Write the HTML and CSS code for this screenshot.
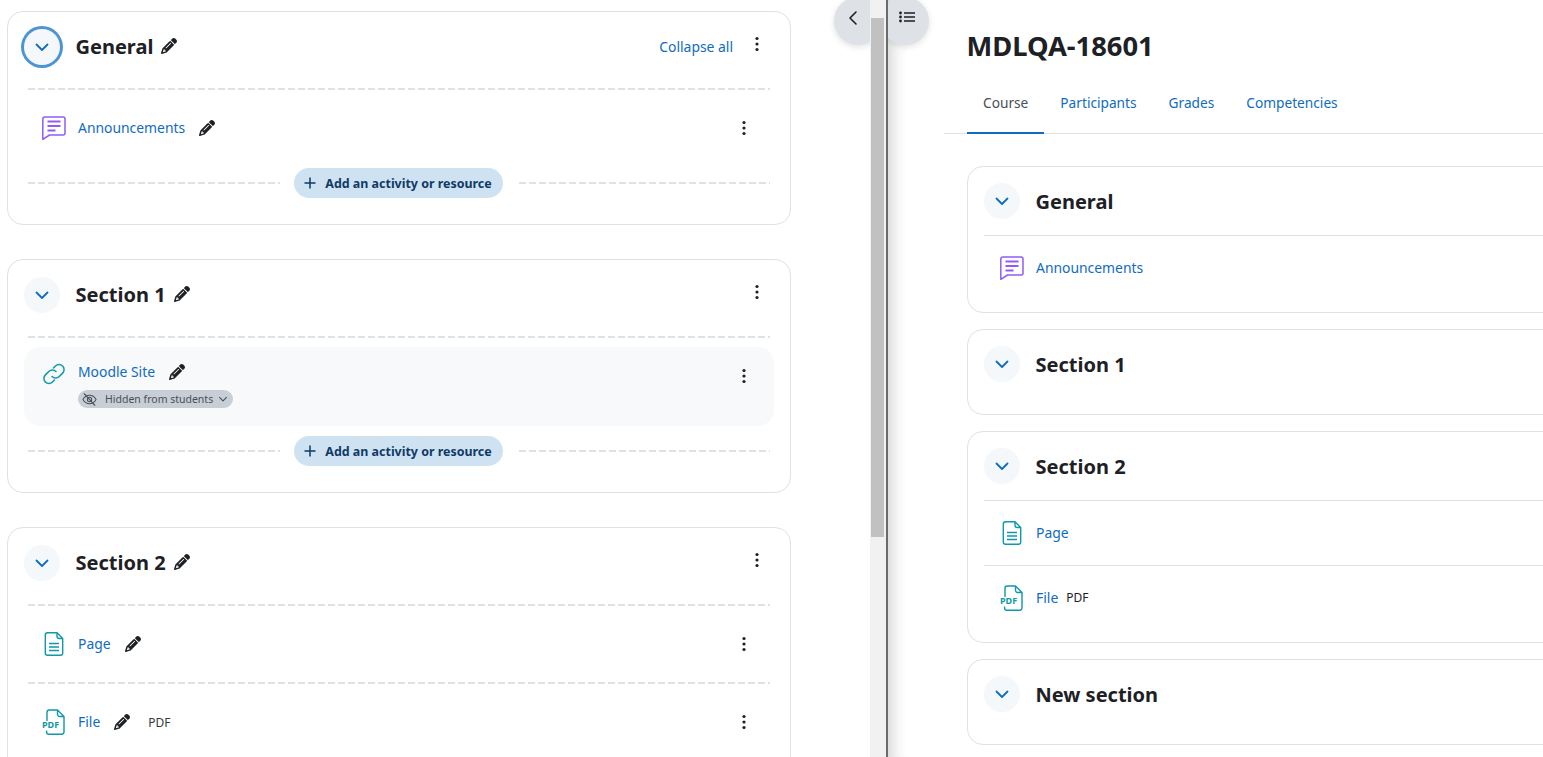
FILE: index.html
```html
<!DOCTYPE html>
<html lang="en">
<head>
<meta charset="utf-8">
<title>MDLQA-18601</title>
<link rel="stylesheet" href="styles.css">
</head>
<body>
<svg class="defs" width="0" height="0" aria-hidden="true">
  <symbol id="pencil" viewBox="0 0 512 512"><path d="M410.3 231l11.3-11.3-33.9-33.9-62.1-62.1L291.7 89.8l-11.3 11.3-22.6 22.6L58.6 322.9c-10.4 10.4-18 23.3-22.2 37.4L1 480.7c-2.5 8.4-.2 17.5 6.1 23.7s15.3 8.5 23.7 6.1l120.3-35.4c14.1-4.2 27-11.8 37.4-22.2L387.7 253.7 410.3 231zM160 399.4l-9.1 22.7c-4 3.1-8.5 5.4-13.3 6.9L59.4 452l23-78.1c1.4-4.9 3.8-9.4 6.9-13.3l22.7-9.1v32c0 8.8 7.2 16 16 16h32zM362.7 18.7L348.3 33.2 325.7 55.8 314.3 67.1l33.9 33.9 62.1 62.1 33.9 33.9 11.3-11.3 22.6-22.6 14.5-14.5c25-25 25-65.5 0-90.5L453.3 18.7c-25-25-65.5-25-90.5 0zm-47.4 168l-144 144c-6.2 6.2-16.4 6.2-22.6 0s-6.2-16.4 0-22.6l144-144c6.2-6.2 16.4-6.2 22.6 0s6.2 16.4 0 22.6z"/></symbol>
  <symbol id="chev" viewBox="0 0 16 16"><path d="M2.500 5.500 8 11l5.500-5.500" fill="none" stroke="currentColor" stroke-width="1.800" stroke-linecap="round" stroke-linejoin="round"/></symbol>
  <symbol id="kebab" viewBox="0 0 4 16"><circle cx="2" cy="2.500" r="1.600"/><circle cx="2" cy="8" r="1.600"/><circle cx="2" cy="13.500" r="1.600"/></symbol>
  <symbol id="forum" viewBox="0 0 24 24"><path d="M3 1h18a2 2 0 0 1 2 2v14a2 2 0 0 1-2 2H7.500L.8 23.400V3.200A2.200 2.200 0 0 1 3 1Z" fill="none" stroke="currentColor" stroke-width="1.500" stroke-linejoin="round"/><path d="M5.500 5.500h13M5.500 10h13M5.500 14.500h8" fill="none" stroke="currentColor" stroke-width="1.900"/></symbol>
  <symbol id="link" viewBox="0 0 24 24"><path d="M10 14.500a5 5 0 0 0 7.200 0l3.400-3.400a5 5 0 0 0-7.100-7.100l-2 2M14 9.500a5 5 0 0 0-7.200 0l-3.400 3.400a5 5 0 0 0 7.100 7.100l2-2" fill="none" stroke="currentColor" stroke-width="1.500" stroke-linecap="round"/></symbol>
  <symbol id="page" viewBox="0 0 24 24"><path d="M5.500.8h9.500l5.700 5.700V21a2.200 2.200 0 0 1-2.200 2.200H5.500A2.200 2.200 0 0 1 3.300 21V3A2.200 2.200 0 0 1 5.500.8ZM15 .8V4.300a2.200 2.200 0 0 0 2.200 2.200h3.500" fill="none" stroke="currentColor" stroke-width="1.400" stroke-linejoin="round"/><path d="M7 11.500h10M7 15h10M7 18.500h10" fill="none" stroke="currentColor" stroke-width="1.700"/></symbol>
  <symbol id="eye" viewBox="0 0 16 16"><path d="M1 8s2.600-4.500 7-4.500S15 8 15 8s-2.600 4.500-7 4.500S1 8 1 8Z" fill="none" stroke="currentColor" stroke-width="1.100"/><circle cx="8" cy="8" r="2.300" fill="none" stroke="currentColor" stroke-width="1.100"/><path d="M2 1.500 14 14.500" stroke="currentColor" stroke-width="1.300"/></symbol>
  <symbol id="pdfdoc" viewBox="0 0 24 26"><path d="M5 12V3.200A2.200 2.200 0 0 1 7.200 1h8.300L22 7.500V23a2.200 2.200 0 0 1-2.200 2.200H6.800A2.200 2.200 0 0 1 4.600 23v-1.500M15.500 1v4.300a2.200 2.200 0 0 0 2.200 2.200H22" fill="none" stroke="currentColor" stroke-width="1.400" stroke-linejoin="round"/></symbol>
</svg>

<main class="editor">
  <section class="ecard">
    <header class="ehead">
      <span class="toggle focus"><svg class="chev"><use href="#chev"/></svg></span>
      <h3 class="etitle">General</h3>
      <svg class="pencil title-pencil"><use href="#pencil"/></svg>
      <a class="collapse">Collapse all</a>
      <svg class="kebab head-kebab"><use href="#kebab"/></svg>
    </header>
    <div class="dash"></div>
    <div class="item item-first">
      <svg class="aicon forum"><use href="#forum"/></svg>
      <div class="ibody"><div class="iline"><a class="iname">Announcements</a><svg class="pencil"><use href="#pencil"/></svg></div></div>
      <svg class="kebab"><use href="#kebab"/></svg>
    </div>
    <div class="addrow"><div class="dash grow"></div><button class="addbtn"><svg class="plus" viewBox="0 0 12 12"><path d="M6 .5v11M.5 6h11"/></svg>Add an activity or resource</button><div class="dash grow"></div></div>
  </section>

  <section class="ecard">
    <header class="ehead">
      <span class="toggle"><svg class="chev"><use href="#chev"/></svg></span>
      <h3 class="etitle">Section 1</h3>
      <svg class="pencil title-pencil"><use href="#pencil"/></svg>
      <svg class="kebab head-kebab push"><use href="#kebab"/></svg>
    </header>
    <div class="dash"></div>
    <div class="item item-hidden">
      <svg class="aicon teal"><use href="#link"/></svg>
      <div class="ibody">
        <div class="iline"><a class="iname">Moodle Site</a><svg class="pencil"><use href="#pencil"/></svg></div>
        <span class="badge"><svg class="eye"><use href="#eye"/></svg>Hidden from students<svg class="bchev"><use href="#chev"/></svg></span>
      </div>
      <svg class="kebab"><use href="#kebab"/></svg>
    </div>
    <div class="addrow"><div class="dash grow"></div><button class="addbtn"><svg class="plus" viewBox="0 0 12 12"><path d="M6 .5v11M.5 6h11"/></svg>Add an activity or resource</button><div class="dash grow"></div></div>
  </section>

  <section class="ecard">
    <header class="ehead">
      <span class="toggle"><svg class="chev"><use href="#chev"/></svg></span>
      <h3 class="etitle">Section 2</h3>
      <svg class="pencil title-pencil"><use href="#pencil"/></svg>
      <svg class="kebab head-kebab push"><use href="#kebab"/></svg>
    </header>
    <div class="dash"></div>
    <div class="item">
      <svg class="aicon teal"><use href="#page"/></svg>
      <div class="ibody"><div class="iline"><a class="iname">Page</a><svg class="pencil"><use href="#pencil"/></svg></div></div>
      <svg class="kebab"><use href="#kebab"/></svg>
    </div>
    <div class="dash"></div>
    <div class="item">
      <svg class="aicon teal pdficon" viewBox="0 0 24 26"><use href="#pdfdoc"/><text x="0" y="19" class="pdf-mark">PDF</text></svg>
      <div class="ibody"><div class="iline"><a class="iname">File</a><svg class="pencil"><use href="#pencil"/></svg><span class="ftype ftype-edit">PDF</span></div></div>
      <svg class="kebab"><use href="#kebab"/></svg>
    </div>
  </section>
</main>

<div class="scrollbar"><div class="thumb"></div></div>
<div class="divider"></div>

<aside class="preview">
  <h1 class="ptitle">MDLQA-18601</h1>
  <nav class="tabs">
    <a class="tab active">Course</a>
    <a class="tab">Participants</a>
    <a class="tab">Grades</a>
    <a class="tab">Competencies</a>
  </nav>
  <div class="pcards">
    <section class="pcard">
      <header class="phead"><span class="toggle"><svg class="chev"><use href="#chev"/></svg></span><h3 class="etitle">General</h3></header>
      <div class="pitem"><svg class="aicon forum"><use href="#forum"/></svg><a class="iname">Announcements</a></div>
    </section>
    <section class="pcard pempty">
      <header class="phead"><span class="toggle"><svg class="chev"><use href="#chev"/></svg></span><h3 class="etitle">Section 1</h3></header>
    </section>
    <section class="pcard">
      <header class="phead"><span class="toggle"><svg class="chev"><use href="#chev"/></svg></span><h3 class="etitle">Section 2</h3></header>
      <div class="pitem"><svg class="aicon teal"><use href="#page"/></svg><a class="iname">Page</a></div>
      <div class="pitem"><svg class="aicon teal pdficon" viewBox="0 0 24 26"><use href="#pdfdoc"/><text x="0" y="19" class="pdf-mark">PDF</text></svg><a class="iname">File</a><span class="ftype">PDF</span></div>
    </section>
    <section class="pcard pempty">
      <header class="phead"><span class="toggle"><svg class="chev"><use href="#chev"/></svg></span><h3 class="etitle">New section</h3></header>
    </section>
  </div>
</aside>

<button class="drawer drawer-left"><svg class="dleft" viewBox="0 0 10 16"><path d="M8 2 2 8l6 6" fill="none" stroke="currentColor" stroke-width="1.600" stroke-linecap="round" stroke-linejoin="round"/></svg></button>
<button class="drawer drawer-right"><svg class="dlist" viewBox="0 0 16 12"><circle cx="1.500" cy="2" r="1.400"/><circle cx="1.500" cy="6" r="1.400"/><circle cx="1.500" cy="10" r="1.400"/><path d="M5 2h11M5 6h11M5 10h11" stroke="currentColor" stroke-width="1.500"/></svg></button>
</body>
</html>
```

FILE: styles.css
```css
* { box-sizing: border-box; }
html, body { height: 100%; }
body {
  margin: 0;
  display: flex;
  height: 757px;
  overflow: hidden;
  background: #fff;
  color: #1d2125;
  font-family: "Noto Sans", "Open Sans", sans-serif;
  font-size: 14px;
}
.defs { position: absolute; }
a { color: #0f6cbf; text-decoration: none; }

/* left editor pane */
.editor {
  flex: 0 0 870px;
  height: 757px;
  overflow: hidden;
  padding: 11px 79px 0 7px;
}
.ecard {
  border: 1px solid #dee2e6;
  border-radius: 16px;
  margin-bottom: 34px;
  padding: 0 0 26px;
}
.ehead {
  display: flex;
  align-items: center;
  height: 76px;
  padding: 0 25px 7px 16px;
}
.etitle {
  margin: 1px 0 0 15.500px;
  font-size: 20px;
  font-weight: 700;
  line-height: 24px;
  color: #1d2125;
}
.toggle {
  flex: none;
  width: 36px;
  height: 36px;
  border-radius: 50%;
  background: #f4f8fb;
  color: #0f6cbf;
  display: flex;
  align-items: center;
  justify-content: center;
}
.toggle.focus { box-shadow: 0 0 0 3px #4d94d4; }
.chev { width: 16px; height: 16px; }
.pencil { width: 16px; height: 16px; fill: #1d2125; flex: none; margin-top: -1px; }
.title-pencil { margin-left: 8px; }
.collapse { margin-left: auto; font-size: 13.900px; margin-right: 22px; }
.kebab { width: 4px; height: 16px; fill: #1d2125; flex: none; }
.head-kebab { margin-top: -5px; margin-right: 6px; }
.push { margin-left: auto; }
.dash {
  height: 2px;
  margin: 0 20px;
  background: repeating-linear-gradient(90deg, #dee2e6 0 7px, transparent 7px 10px);
}
.dash.grow { flex: 1; margin: 0; }
.item {
  display: flex;
  align-items: center;
  height: 58px;
  margin: 9px 16px;
  padding: 0 28px 0 18px;
}
.item-first { margin-bottom: 11px; }
.item-hidden {
  height: 79px;
  margin-bottom: 10px;
  background: #f8f9fa;
  border-radius: 16px;
  align-items: flex-start;
  padding-top: 15px;
}
.item-hidden .kebab { margin-top: 6px; }
.aicon { width: 24px; height: 24px; flex: none; color: #0e98a8; }
.pdficon { height: 26px; }
.forum { color: #8f5cf6; }
.ibody { flex: 1; margin-left: 12px; min-width: 0; }
.iline { display: flex; align-items: center; gap: 14px; height: 20px; }
.iname { font-size: 13.900px; line-height: 20px; }
.ftype { font-size: 12px; color: #1d2125; }
.ftype-edit { margin-left: 4px; color: #343a40; }
.badge {
  display: inline-flex;
  align-items: center;
  height: 18px;
  margin-top: 8px;
  padding: 0 5px 0 4px;
  border-radius: 9px;
  background: #c8ced6;
  color: #495057;
  font-size: 10.500px;
  white-space: nowrap;
}
.eye { width: 15px; height: 15px; margin-right: 8px; }
.bchev { width: 10px; height: 10px; margin-left: 5px; }
.addrow {
  display: flex;
  align-items: center;
  gap: 15px;
  padding: 0 20px;
}
.addbtn {
  flex: none;
  width: 209px;
  height: 30px;
  margin: 0 1px 0 -1px;
  border: 0;
  border-radius: 15px;
  padding: 0;
  background: #cfe2f1;
  color: #0f3a66;
  display: flex;
  align-items: center;
  justify-content: center;
  font: 700 12.450px "Noto Sans", "Open Sans", sans-serif;
  white-space: nowrap;
}
.plus {
  width: 12px;
  height: 12px;
  margin-right: 9px;
  fill: none;
  stroke: currentColor;
  stroke-width: 1.500;
}

/* scrollbar + divider */
.scrollbar {
  flex: 0 0 16px;
  height: 757px;
  background: #f1f1f1;
  padding: 18px 2px 0 1px;
}
.thumb { height: 519px; background: #c1c1c1; }
.divider { flex: 0 0 2px; height: 757px; background: #6a6a6a; }

/* right preview pane */
.preview {
  flex: 1;
  min-width: 0;
  height: 757px;
  overflow: hidden;
  padding-left: 56px;
  box-shadow: inset 18px 0 16px -14px rgba(0, 0, 0, .18);
}
.ptitle {
  margin: 0;
  height: 72px;
  padding: 29px 0 0 22.500px;
  font-size: 27.300px;
  line-height: 34px;
  font-weight: 700;
}
.tabs {
  display: flex;
  height: 62px;
  width: 800px;
  padding-left: 23px;
  border-bottom: 1px solid #dee2e6;
}
.tab {
  display: flex;
  align-items: center;
  padding: 0 16px 2px;
  height: 62px;
  font-size: 13.700px;
  margin-bottom: -1px;
}
.tab.active { color: #495057; border-bottom: 2px solid #0f6cbf; padding-bottom: 0; }
.pcards {
  width: 800px;
  padding: 32px 0 0 23px;
  display: flex;
  flex-direction: column;
  gap: 16px;
}
.pcard {
  border: 1px solid #dee2e6;
  border-radius: 16px;
  padding-bottom: 12px;
}
.pempty { height: 86px; }
.phead {
  display: flex;
  align-items: center;
  height: 68px;
  padding: 0 0 0 16px;
}
.pitem {
  display: flex;
  align-items: center;
  height: 65px;
  margin-left: 16px;
  padding: 0 0 1px 16px;
  border-top: 1px solid #dee2e6;
}
.pitem .iname { margin-left: 12px; }
.pitem .ftype { margin-left: 8px; }

/* course index and block drawer toggles */
.drawer {
  position: absolute;
  top: -3px;
  width: 48px;
  height: 48px;
  border: 0;
  border-radius: 50%;
  background: #dee2e6;
  color: #1d2125;
  padding: 0;
  box-shadow: 0 2px 6px rgba(0, 0, 0, .12);
}
.drawer-left {
  left: 834px;
  clip-path: inset(-10px 12px -10px -10px);
  padding-left: 14px;
}
.drawer-right {
  left: 881px;
  clip-path: inset(-10px -10px -10px 7px);
  padding-left: 18px;
}
.dleft { width: 10px; height: 16px; display: block; margin-top: -6px; }
.dlist { width: 16px; height: 12px; display: block; fill: #1d2125; margin-top: -8px; }
.pdf-mark { font: 700 9px "Noto Sans", sans-serif; fill: currentColor; }
```
